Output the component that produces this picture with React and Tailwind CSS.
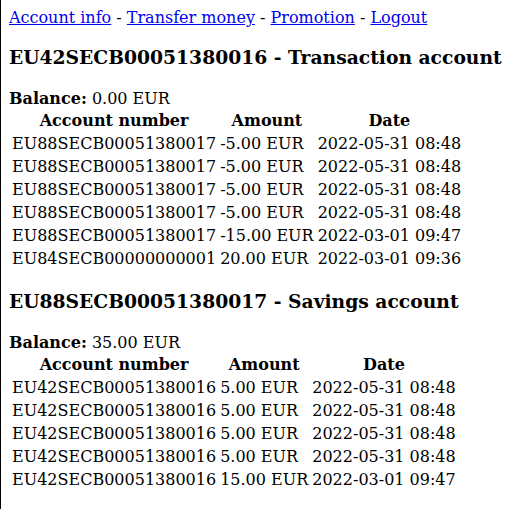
import React from "react";

const accounts = [
  {
    iban: "EU42SECB00051380016",
    type: "Transaction account",
    balance: "0.00 EUR",
    rows: [
      ["EU88SECB00051380017", "-5.00 EUR", "2022-05-31 08:48"],
      ["EU88SECB00051380017", "-5.00 EUR", "2022-05-31 08:48"],
      ["EU88SECB00051380017", "-5.00 EUR", "2022-05-31 08:48"],
      ["EU88SECB00051380017", "-5.00 EUR", "2022-05-31 08:48"],
      ["EU88SECB00051380017", "-15.00 EUR", "2022-03-01 09:47"],
      ["EU84SECB00000000001", "20.00 EUR", "2022-03-01 09:36"],
    ],
  },
  {
    iban: "EU88SECB00051380017",
    type: "Savings account",
    balance: "35.00 EUR",
    rows: [
      ["EU42SECB00051380016", "5.00 EUR", "2022-05-31 08:48"],
      ["EU42SECB00051380016", "5.00 EUR", "2022-05-31 08:48"],
      ["EU42SECB00051380016", "5.00 EUR", "2022-05-31 08:48"],
      ["EU42SECB00051380016", "5.00 EUR", "2022-05-31 08:48"],
      ["EU42SECB00051380016", "15.00 EUR", "2022-03-01 09:47"],
    ],
  },
];

const links = ["Account info", "Transfer money", "Promotion", "Logout"];

const App = () => {
  return (
    <div className="min-h-screen border-l border-black px-2 py-2 font-['DejaVu_Serif',serif] text-base leading-[normal] text-black bg-white">
      {/* Nav */}
      <div>
        {links.map((l, i) => (
          <React.Fragment key={l}>
            {i > 0 && " - "}
            <a href="#" className="text-[#0000ee] underline">
              {l}
            </a>
          </React.Fragment>
        ))}
      </div>

      {accounts.map((acc) => (
        <div key={acc.iban}>
          <h3 className="text-[18.72px] font-bold mt-[18.72px] mb-[21.5px]">
            {acc.iban} - {acc.type}
          </h3>
          <div>
            <b>Balance:</b> {acc.balance}
          </div>
          <table className="border-separate border-spacing-[2px]">
            <thead>
              <tr>
                <th className="p-px font-bold text-center">Account number</th>
                <th className="p-px font-bold text-center">Amount</th>
                <th className="p-px font-bold text-center">Date</th>
              </tr>
            </thead>
            <tbody>
              {acc.rows.map((r, i) => (
                <tr key={i}>
                  {r.map((c, j) => (
                    <td key={j} className="p-px text-left">
                      {c}
                    </td>
                  ))}
                </tr>
              ))}
            </tbody>
          </table>
        </div>
      ))}
    </div>
  );
};

export default App;
